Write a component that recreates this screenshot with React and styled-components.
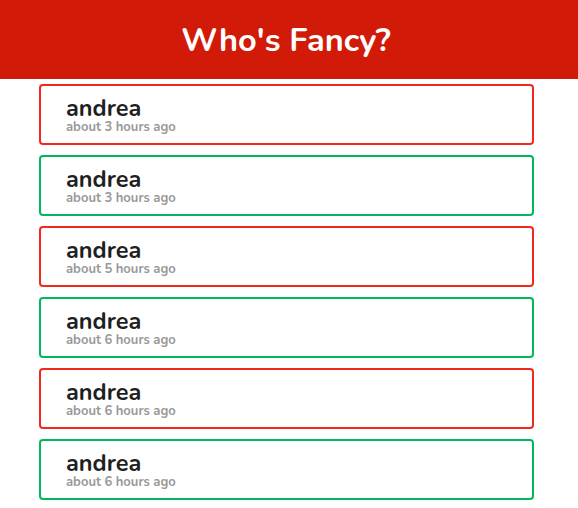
import React from 'react'
import styled, { createGlobalStyle } from 'styled-components';

const GlobalStyle = createGlobalStyle`
body{
    margin: 0;
    background: #fff;
    font-family: "Nunito", Lato, "Open Sans", sans-serif;
}
`;

const Header = styled.header`
height: 79px;
background: #d11b08;
display: flex;
align-items: center;
justify-content: center;
padding-right: 6px;
`;

const Title = styled.h1`
margin: 0;
color: #fff;
font-size: 32.5px;
font-weight: 700;
`;

const List = styled.div`
display: flex;
flex-direction: column;
gap: 10px;
width: 495px;
margin: 5px 0 0 39px;
`;

const Card = styled.div`
box-sizing: border-box;
height: 61px;
border: 2px solid ${props => props.fancy ? '#00b85c' : '#f0281e'};
border-radius: 4px;
padding: 10px 0 0 25px;
`;

const Name = styled.div`
font-size: 23.5px;
font-weight: 700;
color: #1f1f1f;
line-height: 24px;
`;

const Time = styled.div`
font-size: 13px;
font-weight: 700;
color: #999;
line-height: 15px;
`;

const votes = [
    { name: 'andrea', time: 'about 3 hours ago', fancy: false },
    { name: 'andrea', time: 'about 3 hours ago', fancy: true },
    { name: 'andrea', time: 'about 5 hours ago', fancy: false },
    { name: 'andrea', time: 'about 6 hours ago', fancy: true },
    { name: 'andrea', time: 'about 6 hours ago', fancy: false },
    { name: 'andrea', time: 'about 6 hours ago', fancy: true },
];

const App = () => {
    return (
        <>
            <GlobalStyle />
            <Header>
                <Title>Who's Fancy?</Title>
            </Header>
            <List>
                {votes.map((v, i) => (
                    <Card key={i} fancy={v.fancy}>
                        <Name>{v.name}</Name>
                        <Time>{v.time}</Time>
                    </Card>
                ))}
            </List>
        </>
    )
}

export default App
